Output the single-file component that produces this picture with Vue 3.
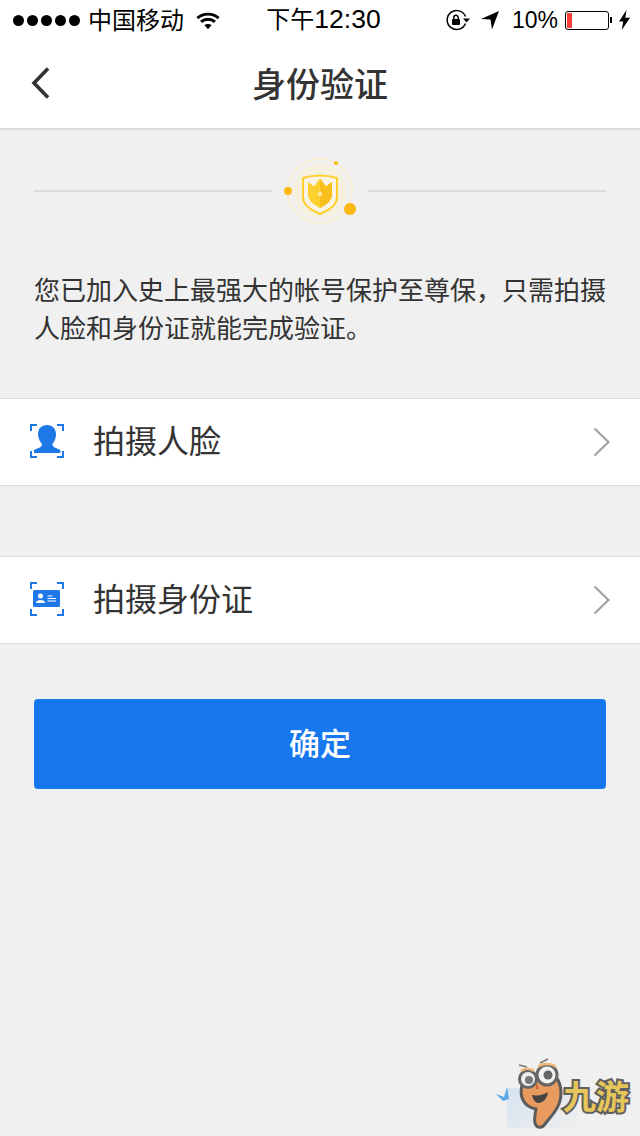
<template>
  <div class="page">
    <div class="statusbar">
      <div class="sb-left">
        <span class="dots"><i v-for="n in 5" :key="n"></i></span>
        <span class="carrier">中国移动</span>
        <svg class="wifi" width="24" height="19" viewBox="0 0 26 20">
          <path d="M1.500 7.500C7.800 1.600 18.200 1.600 24.500 7.500" fill="none" stroke="#000" stroke-width="3.200"/>
          <path d="M5.500 11.500C9.600 7.800 16.400 7.800 20.500 11.500" fill="none" stroke="#000" stroke-width="3.200"/>
          <path d="M9 15c2.300-1.700 5.700-1.700 8 0l-4 4.500z" fill="#000"/>
        </svg>
      </div>
      <div class="sb-time">下午<span class="digits">12:30</span></div>
      <div class="sb-right">
        <svg width="24" height="22" viewBox="0 0 24 22">
          <path d="M19.500 14.500A9.500 9.500 0 1 1 19.500 7.500" fill="none" stroke="#000" stroke-width="1.500"/>
          <path d="M17 9.500h7l-3.500 4z" fill="#000"/>
          <rect x="6" y="10" width="8" height="6" rx="1" fill="#000"/>
          <path d="M7.800 10V8.500a2.200 2.200 0 0 1 4.400 0V10" fill="none" stroke="#000" stroke-width="1.500"/>
        </svg>
        <svg class="loc" width="18" height="20" viewBox="0 0 18 20">
          <path d="M18 1L11 19.500 9.500 9.500 0 9z" fill="#000"/>
        </svg>
        <span class="pct">10%</span>
        <div class="battery"><div class="level"></div></div>
        <span class="nub"></span>
        <svg class="bolt" width="11" height="20" viewBox="0 0 11 20">
          <path d="M7.500 0L0 11.500h4.200L2.800 20 11 7.800H6.300z" fill="#000"/>
        </svg>
      </div>
    </div>

    <header class="navbar">
      <svg class="back" width="20" height="34" viewBox="0 0 20 34">
        <path d="M17 2.500L3 17l14 14.500" fill="none" stroke="#333" stroke-width="3.600"/>
      </svg>
      <h1 class="title">身份验证</h1>
    </header>

    <div class="badge-row">
      <span class="line"></span>
      <svg class="badge" width="96" height="84" viewBox="0 0 96 84">
        <circle cx="48" cy="42" r="32" fill="none" stroke="#f6edd3" stroke-width="2"/>
        <circle cx="48" cy="42" r="27" fill="#f6f0df"/>
        <path d="M31 29Q48 24 65 29V48Q65 58 48 65 31 58 31 48z" fill="#f8f3e4" stroke="#fdcf2f" stroke-width="2"/>
        <path d="M36 33l6 4.500 6-8 6 8 6-4.500v13Q60 53 48 59 36 53 36 46z" fill="#fdd02f"/>
        <path d="M48 29.500l6 8 6-4.500v13Q60 53 48 59z" fill="#f8bf1c"/>
        <path d="M48 42l2.500 3-2.500 3-2.500-3z" fill="#fde9a6"/>
        <circle cx="16" cy="42" r="4" fill="#fdb913"/>
        <circle cx="64" cy="14" r="2" fill="#fdb913"/>
        <circle cx="78" cy="60" r="6" fill="#fdb913"/>
      </svg>
      <span class="line"></span>
    </div>

    <p class="intro">您已加入史上最强大的帐号保护至尊保，只需拍摄人脸和身份证就能完成验证。</p>

    <div class="cell cell-first">
      <svg class="cell-icon" width="34" height="34" viewBox="0 0 34 34">
        <path d="M1 7V1h6M27 1h6v6M1 27v6h6M27 33h6v-6" fill="none" stroke="#1e78e8" stroke-width="2"/>
        <path d="M17 1c5.500 0 9 3.500 9 9.500 0 4-1.600 7-3.600 9.500 0 2 1 3 3 3.800l5 2.200V29H4v-3l5-2.200c2-.8 3-1.800 3-3.800-2-2.500-4-5.500-4-9.500C8 4.500 11.500 1 17 1z" fill="#1e78e8"/>
      </svg>
      <span class="cell-label">拍摄人脸</span>
      <svg class="arrow" width="18" height="30" viewBox="0 0 18 30">
        <path d="M1.500 1.500L15.500 15 1.500 28.500" fill="none" stroke="#a2a2a2" stroke-width="2.200"/>
      </svg>
    </div>

    <div class="cell cell-second">
      <svg class="cell-icon" width="34" height="34" viewBox="0 0 34 34">
        <path d="M1 7V1h6M27 1h6v6M1 27v6h6M27 33h6v-6" fill="none" stroke="#1e78e8" stroke-width="2"/>
        <rect x="3" y="8" width="27" height="17" rx="1.500" fill="#1e78e8"/>
        <circle cx="10.500" cy="14" r="2.500" fill="#fff"/>
        <path d="M6 21c0-2 2-3 4.500-3s4.500 1 4.500 3z" fill="#fff"/>
        <path d="M17.500 14h5M17.500 16.500h8.500M17.500 19h8.500" stroke="#fff" stroke-width="1"/>
      </svg>
      <span class="cell-label">拍摄身份证</span>
      <svg class="arrow" width="18" height="30" viewBox="0 0 18 30">
        <path d="M1.500 1.500L15.500 15 1.500 28.500" fill="none" stroke="#a2a2a2" stroke-width="2.200"/>
      </svg>
    </div>

    <button class="confirm">确定</button>

    <div class="watermark">
      <div class="wm-box"></div>
      <svg class="wm-bird" width="20" height="20" viewBox="0 0 20 20">
        <path d="M0 8l8 3 3-10 2 12-6 2z" fill="#5aa9e6"/>
      </svg>
      <svg class="wm-nine" width="66" height="76" viewBox="0 0 66 76">
        <path d="M6 28C3 40 8 50 20 52 19 58 18 62 19 66 20 71 26 72 29 67 36 58 45 50 45 36 45 28 43 24 40 20L10 20z" fill="#e89a5f" stroke="#5b5b5b" stroke-width="3"/>
        <path d="M16 38C22 39 27 38 32 35 31 42 27 46 22 46 19 46 17 42 16 38z" fill="#444"/>
        <path d="M20 24l3 8-3 0z" fill="#c96a3a"/>
        <circle cx="12" cy="22" r="8.500" fill="#eee" stroke="#666" stroke-width="3"/>
        <circle cx="13" cy="23" r="4" fill="#777"/>
        <circle cx="31" cy="18" r="10" fill="#f2f2f2" stroke="#666" stroke-width="3"/>
        <circle cx="32" cy="18" r="4.500" fill="#666"/>
        <path d="M5 14c3-3 10-3 13 0M22 10c4-4 14-4 18 0" stroke="#efb878" stroke-width="2.500" fill="none"/>
        <path d="M3 8l8 2M24 6l8-4" stroke="#777" stroke-width="1.500" fill="none"/>
      </svg>
      <span class="wm-text">九游</span>
    </div>
  </div>
</template>

<script setup>
</script>

<style>
html, body { margin: 0; background: #f0f0f0; }
</style>

<style scoped>
.page {
  position: relative;
  width: 640px;
  height: 1136px;
  overflow: hidden;
  background: #f0f0f0;
  font-family: "Liberation Sans", "Noto Sans CJK SC", sans-serif;
  color: #333;
}
.statusbar {
  position: relative;
  height: 40px;
  background: #fff;
  display: flex;
  align-items: center;
  justify-content: space-between;
  padding: 0 10px 0 13px;
  color: #000;
  font-size: 24px;
}
.sb-left, .sb-right { display: flex; align-items: center; }
.dots { display: flex; gap: 3px; }
.dots i { width: 11px; height: 11px; border-radius: 50%; background: #000; }
.carrier { margin-left: 8px; padding-bottom: 4px; }
.wifi { margin-left: 12px; }
.sb-time {
  position: absolute;
  left: 7px;
  right: 0;
  top: 0;
  line-height: 38px;
  text-align: center;
  pointer-events: none;
}
.digits { font-size: 26.500px; }
.loc { margin-left: 11px; }
.pct { margin-left: 13px; font-size: 23px; padding-top: 1px; }
.battery {
  box-sizing: border-box;
  width: 44px;
  height: 19px;
  margin-left: 7px;
  border: 1px solid #000;
  border-radius: 3px;
  padding: 1px;
}
.level { width: 5px; height: 15px; background: #fc3d39; }
.nub { width: 2px; height: 6px; margin-left: 1px; background: #000; }
.bolt { margin-left: 7px; }

.navbar {
  height: 88px;
  background: #fff;
  border-bottom: 2px solid #dcdcdc;
  display: flex;
  align-items: center;
  justify-content: center;
  position: relative;
}
.back { position: absolute; left: 31px; top: 26px; }
.title {
  margin: 0 0 3px;
  font-size: 34px;
  font-weight: 500;
  color: #333;
}

.badge-row {
  display: flex;
  align-items: center;
  padding: 0 34px;
  height: 84px;
  margin-top: 19px;
}
.line { flex: 1; height: 2px; background: #dcdcdc; }
.badge { margin: 0; flex: none; }

.intro {
  margin: 0;
  padding: 39px 34px 0;
  font-size: 26px;
  line-height: 38px;
  color: #333;
}

.cell {
  height: 86px;
  background: #fff;
  border-top: 1px solid #dcdcdc;
  border-bottom: 1px solid #dcdcdc;
  display: flex;
  align-items: center;
  padding: 0 29px 0 29px;
}
.cell-first { margin-top: 50px; }
.cell-second { margin-top: 70px; }
.cell-icon { flex: none; margin: 0 0 3px 1px; }
.cell-label {
  flex: 1;
  margin-left: 29px;
  padding-bottom: 6px;
  font-size: 32px;
  color: #333;
}
.confirm {
  display: block;
  width: 572px;
  height: 90px;
  margin: 55px 0 0 34px;
  padding: 0 0 6px;
  border: 0;
  border-radius: 4px;
  background: #1677ee;
  color: #fff;
  font: inherit;
  font-size: 31px;
  font-weight: 500;
}

.watermark {
  position: absolute;
  left: 480px;
  top: 1046px;
  width: 160px;
  height: 90px;
}
.wm-box {
  position: absolute;
  left: 27px;
  top: 42px;
  width: 70px;
  height: 40px;
  background: linear-gradient(135deg, #d7e4f0, #efefef);
}
.wm-bird { position: absolute; left: 16px; top: 40px; }
.wm-nine { position: absolute; left: 36px; top: 11px; }
.wm-text {
  position: absolute;
  left: 83px;
  top: 34px;
  font-size: 33px;
  line-height: 36px;
  font-weight: 700;
  color: #e6c65a;
  -webkit-text-stroke: 4px #5f5f5f;
  paint-order: stroke fill;
}
</style>
